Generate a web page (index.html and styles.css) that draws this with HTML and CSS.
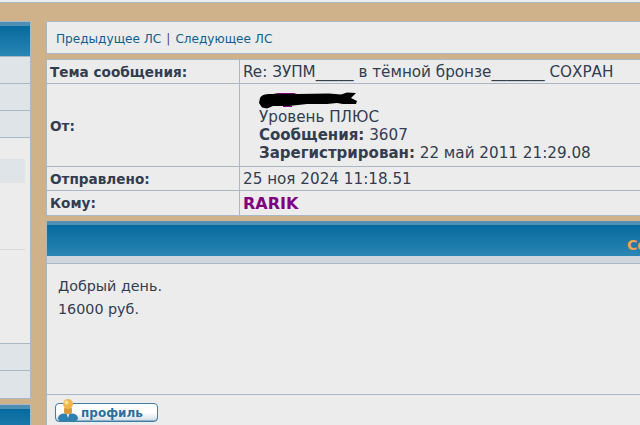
FILE: index.html
```html
<!DOCTYPE html>
<html lang="ru">
<head>
<meta charset="utf-8">
<title>ЛС</title>
<link rel="stylesheet" href="styles.css">
</head>
<body>
<div class="topline"></div>
<div class="page">
  <aside class="side">
    <div class="side-box">
      <div class="head"></div>
      <div class="side-row"></div>
      <div class="side-row"></div>
      <div class="side-row"></div>
      <div class="side-body">
        <div class="side-cell"></div>
        <div class="side-rule"></div>
      </div>
      <div class="side-row alt"></div>
      <div class="side-row alt last"></div>
    </div>
    <div class="side-box second">
      <div class="head"></div>
    </div>
  </aside>
  <main class="main">
    <nav class="pager">
      <a href="#">Предыдущее ЛС</a><span class="sep">|</span><a href="#">Следующее ЛС</a>
    </nav>
    <section class="info">
      <div class="label r1">Тема сообщения:</div>
      <div class="value r1">Re: ЗУПМ_____ в тёмной бронзе_______ СОХРАН</div>
      <div class="label r2">От:</div>
      <div class="value r2 author">
        <svg class="blot" width="100" height="17" viewBox="0 0 100 17">
          <path d="M1 6C3 2 8 2 14 2L20 1L34 1L38 2L70 1.500L82 2.500L88 0.500L97 1L92 6L98 9L97 12L84 12L78 11L68 12L48 12L30 14L14 14L8 16.500L3 15.500L0 11Z" fill="#000"/>
          <path d="M18 1H35V2H18ZM24 14H33V15H24Z" fill="#800080"/>
        </svg>
        <div>Уровень ПЛЮС</div>
        <div><b>Сообщения:</b> 3607</div>
        <div><b>Зарегистрирован:</b> 22 май 2011 21:29.08</div>
      </div>
      <div class="label r3">Отправлено:</div>
      <div class="value r3">25 ноя 2024 11:18.51</div>
      <div class="label r4">Кому:</div>
      <div class="value r4 to">RARIK</div>
    </section>
    <article class="post">
      <header class="post-head"><span class="post-title">Сообщение</span></header>
      <div class="post-strip"></div>
      <div class="post-body">
        <p>Добрый день.</p>
        <p>16000 руб.</p>
      </div>
      <footer class="post-foot">
        <a class="btn" href="#">
          <svg class="btn-icon" width="22" height="24" viewBox="0 0 22 24">
            <path d="M1 21C1 17 4 15.500 8 15.500H14C18 15.500 21 17 21 21L19 23H3Z" fill="#2f80ae"/>
            <path d="M9.500 15.500H12.500L11 20Z" fill="#e8eef2"/>
            <rect x="7" y="9" width="8" height="7" rx="2.500" fill="#d89a3a"/>
            <circle cx="11" cy="6" r="5" fill="#f0b64c"/>
            <circle cx="9.500" cy="4.500" r="2" fill="#fadf9a"/>
          </svg>
          <span>профиль</span>
        </a>
      </footer>
    </article>
  </main>
</div>
</body>
</html>
```
FILE: styles.css
```css
* { box-sizing: border-box; }
html, body { margin: 0; padding: 0; }
body {
  width: 640px;
  height: 425px;
  overflow: hidden;
  background: #cfb28a;
  font-family: "DejaVu Sans", sans-serif;
  color: #323d4f;
}
.topline { height: 3px; background: #eceded; border-bottom: 1px solid #a9b8c6; }
.page { display: flex; gap: 15px; padding-top: 18px; }
.side { width: 31px; flex: none; }
.side-box { border: 1px solid #a9b8c6; border-left: 0; border-right-width: 1px; }
.head {
  height: 35px;
  border-top: 4px solid #4e8fb3;
  background: linear-gradient(#066a9e, #2a86b5);
  border-bottom: 1px solid #a9b8c6;
}
.side-row { height: 27px; background: #dfe4e8; border-bottom: 1px solid #a9b8c6; }
.side-row.last { border-bottom: 0; }
.side-body { height: 206px; padding-top: 21px; background: #ececec; border-bottom: 1px solid #a9b8c6; }
.side-cell { width: 25px; height: 24px; background: #dfe4e8; }
.side-rule { width: 25px; margin-top: 66px; border-top: 1px solid #d4d9de; }
.side-box.second { margin-top: 5px; border-bottom: 0; }
.main { width: 640px; flex: none; }
.pager {
  height: 33px;
  padding: 10px 9px 0;
  background: #ececec;
  border: 1px solid #a9b8c6;
  border-right: 0;
  font-size: 12.1px;
  line-height: 15px;
  color: #5b3a8c;
}
.pager a { color: #0f5f8e; text-decoration: none; }
.sep { margin: 0 5px; }
.info {
  display: grid;
  grid-template-columns: 193px 1fr;
  grid-template-rows: 24px 83px 24px 24px;
  margin-top: 5px;
  background: #ececec;
  border: 1px solid #a9b8c6;
  border-right: 0;
  font-size: 15.2px;
}
.label {
  display: flex;
  align-items: center;
  padding-left: 3px;
  font-weight: 700;
  font-size: 13.6px;
  border-right: 1px solid #a9b8c6;
  border-bottom: 1px solid #a9b8c6;
}
.value {
  display: flex;
  align-items: center;
  padding-left: 3px;
  white-space: nowrap;
  border-bottom: 1px solid #a9b8c6;
}
.r2.label { padding-top: 2px; }
.r4 { border-bottom: 0; }
.author { display: block; padding: 8px 0 0 19px; line-height: 18px; }
.author b { font-size: 15px; }
.blot { display: block; margin-bottom: -1px; }
.to { color: #800080; font-weight: 700; font-size: 16px; }
.post { margin-top: 5px; border-left: 1px solid #a9b8c6; }
.post-head {
  height: 35px;
  padding-top: 10px;
  padding-left: 580px;
  border-top: 4px solid #4e8fb3;
  background: linear-gradient(#066a9e, #2a86b5);
  white-space: nowrap;
}
.post-title { color: #f6a24a; font-size: 14px; font-weight: 700; line-height: 16px; }
.post-strip { height: 8px; background: #d0d6de; border-bottom: 1px solid #a9b8c6; }
.post-body {
  height: 131px;
  padding: 11px 0 0 11px;
  background: #ececec;
  border-bottom: 1px solid #a9b8c6;
  font-size: 14.3px;
  line-height: 23px;
}
.post-body p { margin: 0; }
.post-foot { height: 31px; padding: 8px 0 0 8px; background: #ececec; }
.btn {
  display: flex;
  align-items: center;
  position: relative;
  width: 103px;
  height: 19px;
  padding-left: 25px;
  border: 1px solid #3f7fa6;
  border-radius: 4px;
  background: linear-gradient(#ffffff 50%, #d4dde4);
  box-shadow: inset 0 -1px 0 #8fb0c6;
  color: #2a6f9c;
  font-size: 12px;
  font-weight: 700;
  text-decoration: none;
}
.btn-icon { position: absolute; left: 1px; top: -6px; }
```
